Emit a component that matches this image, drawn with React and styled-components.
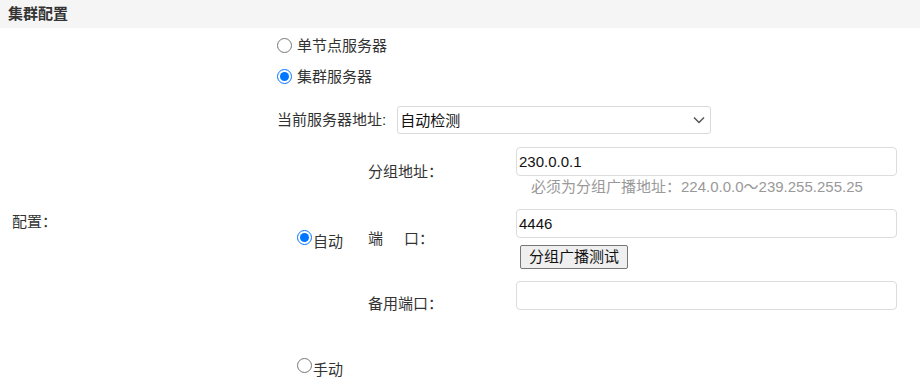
import React from "react";
import styled, { createGlobalStyle } from "styled-components";

const GlobalStyle = createGlobalStyle`
  html, body {
    margin: 0;
    padding: 0;
    overflow: hidden;
    background: #fff;
  }
  body {
    font-family: "Liberation Sans", "Noto Sans CJK SC", sans-serif;
    font-size: 15px;
    color: #333;
  }
`;

const Page = styled.div`
  width: 920px;
`;

const Header = styled.div`
  height: 28px;
  background: #f5f5f5;
  padding-left: 8px;
  display: flex;
  align-items: center;
  font-weight: bold;
  font-size: 15px;
  line-height: 20px;
  color: #333;
`;

const Body = styled.div`
  display: flex;
  height: 388px;
`;

const LeftCell = styled.div`
  width: 265px;
  padding-left: 12px;
  display: flex;
  align-items: center;
  line-height: 20px;
`;

const RightCell = styled.div`
  flex: 1;
  display: flex;
  flex-direction: column;
  padding-top: 2px;
`;

const RadioRow = styled.label`
  height: 31px;
  display: flex;
  align-items: center;
  gap: 5px;
  line-height: 20px;
`;

const Radio = styled.input.attrs({ type: "radio" })`
  width: 15px;
  height: 15px;
  margin: 0;
  accent-color: #0075ff;
  flex: none;
  ${(p) => p.$raised && "margin-top: -2px;"}
`;

const SelectRow = styled.div`
  margin-top: 14px;
  display: flex;
  align-items: center;
  gap: 11px;
  line-height: 20px;
  white-space: nowrap;
`;

const SelectWrap = styled.div`
  position: relative;
  width: 314px;
  height: 28px;
`;

const Select = styled.select`
  appearance: none;
  width: 100%;
  height: 100%;
  box-sizing: border-box;
  border: 1px solid #d9d9d9;
  border-radius: 3px;
  background: #fff;
  padding: 0 24px 0 2px;
  font-family: inherit;
  font-size: 15px;
  color: #111;
  outline: none;
`;

const Chevron = styled.svg`
  position: absolute;
  right: 6px;
  top: 10px;
  pointer-events: none;
`;

const Nested = styled.div`
  margin-top: 7px;
  margin-left: 20px;
  display: grid;
  grid-template-columns: 71px 148px 381px;
`;

const AutoCell = styled.div`
  grid-column: 1;
  grid-row: 1 / span 3;
  align-self: center;
  padding-top: 8px;
`;

const NestedRadio = styled.label`
  display: inline-flex;
  align-items: flex-start;
  gap: 1px;
  line-height: 20px;
`;

const LabelCell = styled.div`
  grid-column: 2;
  align-self: center;
  display: flex;
  justify-content: space-between;
  width: 66px;
  white-space: nowrap;
  line-height: 20px;
`;

const FieldCell = styled.div`
  grid-column: 3;
  padding: 6px 0;
  min-height: ${(p) => p.$minHeight || 0}px;
  display: flex;
  flex-direction: column;
  align-items: flex-start;
`;

const TextInput = styled.input`
  width: 381px;
  height: 29px;
  box-sizing: border-box;
  border: 1px solid #dcdcdc;
  border-radius: 4px;
  padding: 0 2px;
  font-family: inherit;
  font-size: 15px;
  color: #111;
  outline: none;
`;

const Hint = styled.div`
  margin-top: 1px;
  padding-left: 15px;
  font-size: 15px;
  line-height: 20px;
  color: #999;
  white-space: nowrap;
`;

const TestButton = styled.button`
  margin-top: 7px;
  margin-left: 4px;
  height: 24px;
  padding: 0 8px;
  border: 1px solid #767676;
  border-radius: 2px;
  background: #efefef;
  font-family: inherit;
  font-size: 15px;
  color: #111;
  line-height: 20px;
`;

const ManualRow = styled.div`
  margin-left: 20px;
  padding-top: 26px;
`;

const fields = [
  { label: ["分组地址："], value: "230.0.0.1", hint: "必须为分组广播地址：224.0.0.0～239.255.255.25" },
  { label: ["端", "口："], value: "4446", button: "分组广播测试" },
  { label: ["备用端口："], value: "", minHeight: 46 },
];

export default function App() {
  return (
    <Page>
      <GlobalStyle />
      <Header>集群配置</Header>
      <Body>
        <LeftCell>配置：</LeftCell>
        <RightCell>
          <RadioRow>
            <Radio name="mode" />
            单节点服务器
          </RadioRow>
          <RadioRow>
            <Radio name="mode" defaultChecked />
            集群服务器
          </RadioRow>
          <SelectRow>
            <span>当前服务器地址:</span>
            <SelectWrap>
              <Select defaultValue="auto">
                <option value="auto">自动检测</option>
              </Select>
              <Chevron width="12" height="8" viewBox="0 0 12 8">
                <path d="M1 1.5 L6 6.5 L11 1.5" fill="none" stroke="#555" strokeWidth="1.5" />
              </Chevron>
            </SelectWrap>
          </SelectRow>
          <Nested>
            <AutoCell>
              <NestedRadio>
                <Radio name="addr" $raised defaultChecked />
                自动
              </NestedRadio>
            </AutoCell>
            {fields.map((f, i) => (
              <React.Fragment key={i}>
                <LabelCell style={{ gridRow: i + 1 }}>
                  {f.label.map((t) => (
                    <span key={t}>{t}</span>
                  ))}
                </LabelCell>
                <FieldCell style={{ gridRow: i + 1 }} $minHeight={f.minHeight}>
                  <TextInput defaultValue={f.value} />
                  {f.hint && <Hint>{f.hint}</Hint>}
                  {f.button && <TestButton>{f.button}</TestButton>}
                </FieldCell>
              </React.Fragment>
            ))}
          </Nested>
          <ManualRow>
            <NestedRadio>
              <Radio name="addr" $raised />
              手动
            </NestedRadio>
          </ManualRow>
        </RightCell>
      </Body>
    </Page>
  );
}
